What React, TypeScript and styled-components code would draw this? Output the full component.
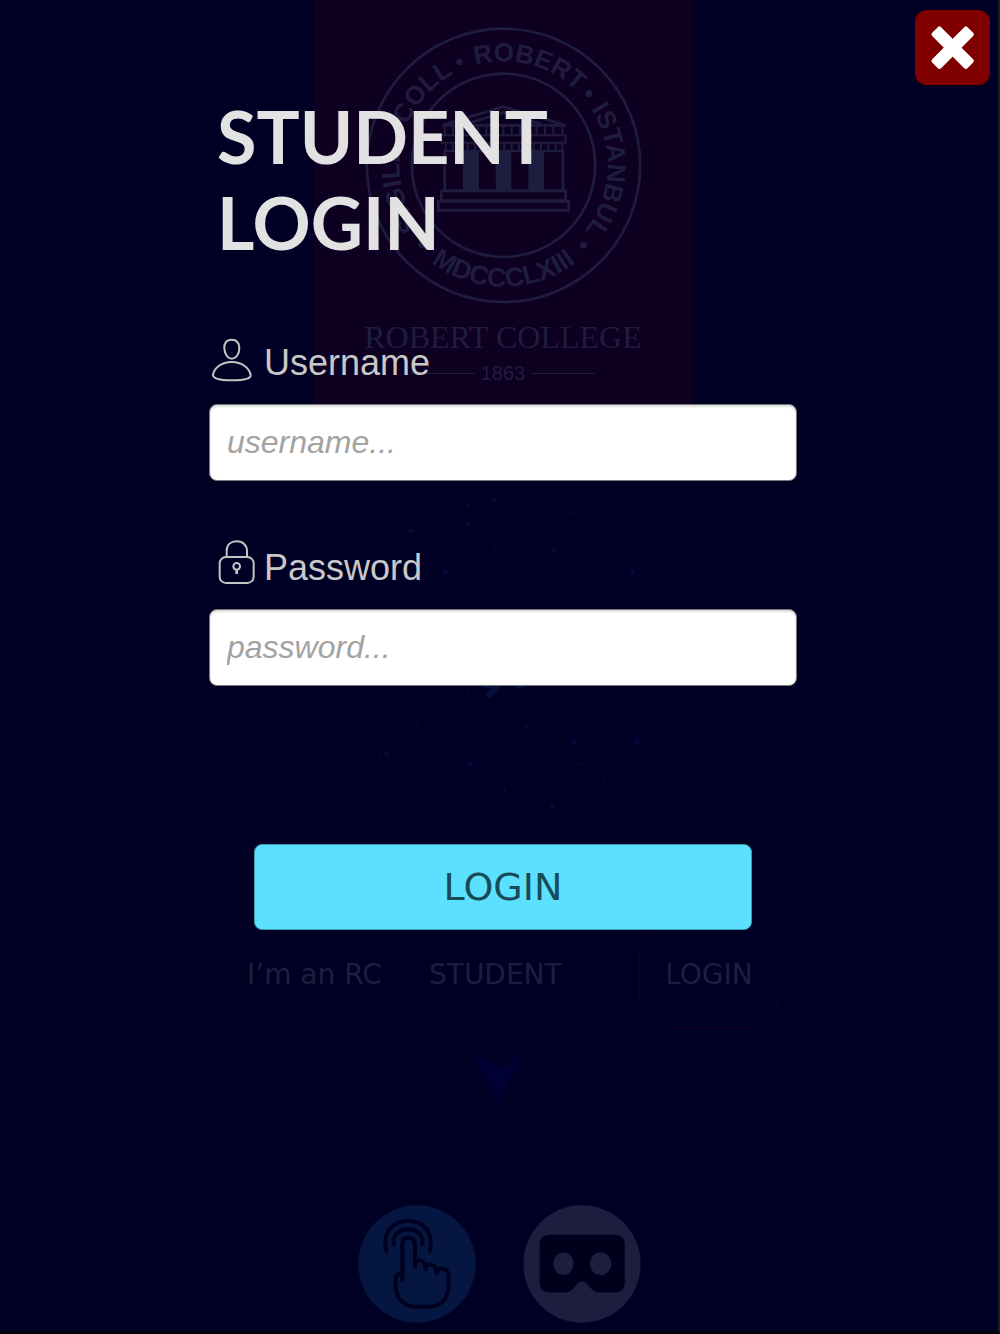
import React from "react";
import styled, { createGlobalStyle } from "styled-components";

const display = `Lato, "Open Sans", sans-serif`;
const wide = `"DejaVu Sans", Verdana, sans-serif`;
const sans = `"Liberation Sans", Arial, sans-serif`;
const serif = `"Liberation Serif", "Times New Roman", serif`;
const ink = "#1f1d3f";
const night = "#000025";

const GlobalStyle = createGlobalStyle`
  *, *::before, *::after { box-sizing: border-box; }
  body { margin: 0; background: ${night}; }
`;

const Screen = styled.div`
  display: grid;
  min-height: 100vh;
  background: ${night};
  border-right: 2px solid #1c1c1f;
  border-bottom: 3px solid #000010;
  & > * { grid-area: 1 / 1; }
`;

const Backdrop = styled.div`
  display: flex;
  flex-direction: column;
  align-items: center;
  color: ${ink};
`;

const Banner = styled.header`
  display: flex;
  flex-direction: column;
  align-items: center;
  width: 379px;
  height: 410px;
  margin-left: 8px;
  padding-top: 26px;
  background: #0d0021;
`;

const CollegeName = styled.div`
  margin-top: 14px;
  font: 32px/36px ${serif};
  white-space: nowrap;
`;

const Founded = styled.div`
  display: flex;
  align-items: center;
  gap: 6px;
  margin-top: 4px;
  font: 20px/28px ${sans};
  &::before, &::after {
    content: "";
    width: 64px;
    height: 1px;
    background: ${ink};
  }
`;

const Network = styled.svg`
  display: block;
  width: 330px;
  height: 350px;
  margin: 70px 0 92px 12px;
`;

const Steps = styled.div`
  display: grid;
  grid-template-columns: 182px 210px 140px;
  align-items: center;
  width: 532px;
  margin-left: 28px;
  font: 28px/32px ${wide};
`;

const StepFrame = styled.span`
  display: grid;
  place-items: center;
  height: 106px;
  border: 1px solid #17001f;
  border-radius: 30px;
`;

const Arrow = styled.svg`
  display: block;
  width: 48px;
  height: 48px;
  margin: 25px 2px 104px 0;
`;

const Modes = styled.div`
  display: flex;
  gap: 47px;
  padding-bottom: 8px;
`;

const ModeIcon = styled.svg`
  display: block;
  width: 118px;
  height: 118px;
`;

const Dialog = styled.main`
  display: flex;
  flex-direction: column;
  align-items: center;
`;

const TopBar = styled.div`
  display: flex;
  justify-content: flex-end;
  align-self: stretch;
  padding: 10px 8px 0;
`;

const CloseButton = styled.button`
  width: 75px;
  height: 75px;
  padding: 0;
  border: 0;
  border-radius: 12px;
  background: #800000;
  cursor: pointer;
  svg { display: block; width: 75px; height: 75px; }
`;

const Form = styled.form`
  display: flex;
  flex-direction: column;
  width: 100%;
  max-width: 588px;
  margin-left: 8px;
  padding-top: 8px;
`;

const Title = styled.h1`
  max-width: 400px;
  margin: 0 0 71px 8px;
  color: #e2e2e2;
  font: 700 72px/86px ${display};
`;

const Field = styled.div`
  display: flex;
  flex-direction: column;
  gap: 14px;
  margin-bottom: 60px;
`;

const FieldLabel = styled.label`
  display: flex;
  align-items: flex-start;
  gap: 11px;
  color: #c8c8c8;
  font: 36px/54px ${sans};
  svg { display: block; width: 44px; height: 48px; overflow: visible; }
`;

const TextBox = styled.input`
  width: 100%;
  height: 77px;
  padding: 0 17px;
  border: 1px solid #777;
  border-radius: 8px;
  background: #fff;
  box-shadow: inset 0 2px 2px #ddd;
  color: #333;
  font: 32px/40px ${sans};
  &::placeholder { color: #a3a3a3; font-style: italic; opacity: 1; }
`;

const LoginButton = styled.button`
  align-self: center;
  width: 498px;
  max-width: 100%;
  height: 86px;
  margin-top: 98px;
  padding: 0;
  border: 1px solid #3a9ab0;
  border-radius: 8px;
  background: #5ce0ff;
  color: #194a57;
  font: 38px/48px ${wide};
  cursor: pointer;
`;

const CX = 613.5;
const CY = 496;

type ArcProps = { id: string; angle: number; radius: number; size: number; flip?: boolean; children: string };

/* A word centred on the given angle, in degrees clockwise from the top. */
const ArcText = ({ id, angle, radius, size, flip, children }: ArcProps) => {
  const point = (deg: number) => {
    const t = (deg * Math.PI) / 180;
    return `${(CX + radius * Math.sin(t)).toFixed(1)} ${(CY - radius * Math.cos(t)).toFixed(1)}`;
  };
  const from = flip ? angle + 80 : angle - 80;
  const to = flip ? angle - 80 : angle + 80;
  return (
    <>
      <path id={id} d={`M${point(from)}A${radius} ${radius} 0 0 ${flip ? 0 : 1} ${point(to)}`} fill="none" />
      <text fontSize={size} fontWeight="700" fontFamily="Liberation Sans, Arial, sans-serif" fill={ink} textAnchor="middle">
        <textPath href={`#${id}`} startOffset="50%">{children}</textPath>
      </text>
    </>
  );
};

const Seal = () => (
  <svg width="277" height="279" viewBox="198 78 831 837" aria-hidden="true">
    <g fill="none" stroke={ink} strokeWidth="8">
      <circle cx={CX} cy={CY} r="410" />
      <circle cx={CX} cy={CY} r="275" />
      <path d="M430 376L613 320L800 376Z M500 372L613 338L727 372" />
      <path d="M437 453H792V572H437Z M427 573H800V602H427Z M418 604H809V631H418Z" />
    </g>
    <g fill="none" stroke={ink} strokeWidth="6">
      <path d="M437 378V408M462 378V408M487 378V408M512 378V408M537 378V408M562 378V408M587 378V408M613 378V408M638 378V408M663 378V408M688 378V408M713 378V408M738 378V408M763 378V408M790 378V408" />
      <path d="M427 406H800V428H427Z M440 428V452M462 428V452M484 428V452M506 428V452M528 428V452M550 428V452M572 428V452M594 428V452M616 428V452M638 428V452M660 428V452M682 428V452M704 428V452M726 428V452M748 428V452M770 428V452M790 428V452" />
    </g>
    <g fill={ink}>
      <path d="M492 453H540V572H492Z M590 453H637V572H590Z M688 453H735V572H688Z" />
      <circle cx="481" cy="186" r="10" />
      <circle cx="870" cy="281" r="10" />
      <circle cx="853" cy="736" r="10" />
      <circle cx="368" cy="734" r="10" />
    </g>
    <ArcText id="arc-sigill" angle={-103} radius={312} size={78}>SIGILL</ArcText>
    <ArcText id="arc-coll" angle={-48} radius={312} size={78}>COLL</ArcText>
    <ArcText id="arc-robert" angle={14.5} radius={312} size={78}>ROBERT</ArcText>
    <ArcText id="arc-istanbul" angle={93} radius={312} size={78}>ISTANBUL</ArcText>
    <ArcText id="arc-year" angle={180} radius={364} size={80} flip>MDCCCLXIII</ArcText>
  </svg>
);

const nodes = [
  [462, 62, 7], [385, 76, 5], [384, 132, 7], [213, 153, 7], [692, 97, 6], [463, 207, 5], [643, 212, 8], [316, 274, 8],
  [878, 273, 8], [50, 361, 5], [385, 638, 5], [235, 742, 5], [560, 740, 5], [702, 786, 8], [890, 784, 8], [929, 714, 4],
  [140, 821, 8], [121, 825, 5], [163, 870, 4], [391, 850, 8], [724, 850, 5], [792, 908, 4], [494, 930, 5], [638, 977, 8],
  [334, 990, 4], [555, 1003, 4],
];

const Globe = () => (
  <Network viewBox="0 0 990 1050" aria-hidden="true">
    <g fill="none" stroke="#02022c" strokeWidth="3">
      <path d="M213 153L384 132M245 274H316L287 350M316 274L400 385M463 207L530 178L643 212L878 273L868 384M643 212L600 310M692 97L750 384M105 290L125 370" />
      <path d="M40 620L100 770M210 620L235 742M560 620L702 786L890 784L868 620M890 784L925 700M391 850L140 821M702 786L391 850M890 784L724 850M280 960L334 990" />
    </g>
    <g fill="#04083a">
      {nodes.map(([x, y, r]) => <circle key={`${x}-${y}`} cx={x} cy={y} r={r} />)}
    </g>
    <path d="M405 616H488L455 652Q443 660 438 643L455 627Z M520 616H580L540 624Q528 626 520 616Z" fill="#080f40" />
  </Network>
);

const TouchIcon = () => (
  <ModeIcon viewBox="54 45 354 356" aria-hidden="true">
    <circle cx="231" cy="223" r="177" fill="#051740" />
    <g fill="none" stroke="#000020" strokeWidth="12" strokeLinecap="round" strokeLinejoin="round">
      <path d="M139 184C125 137 151 93 204 93C257 93 283 137 269 184" />
      <path d="M161 164C157 139 174 118 204 118C234 118 251 139 247 164" />
      <path d="M187 272V163Q187 144 204 144Q225 144 225 163V232V222Q229 211 241 212Q257 214 257 240V234Q263 222 275 225Q290 229 290 252V246Q296 235 309 237Q326 242 326 260V290C326 328 302 352 265 352H232C192 352 174 329 168 304Q164 280 168 262Q172 252 187 250" />
    </g>
  </ModeIcon>
);

const HeadsetIcon = () => (
  <ModeIcon viewBox="548 45 354 356" aria-hidden="true">
    <circle cx="725" cy="223" r="177" fill={ink} />
    <path d="M629 135H823Q854 135 854 166V279Q854 309 823 309H779Q763 309 752 297L738 281Q725 270 712 281L699 297Q688 309 672 309H629Q597 309 597 279V166Q597 135 629 135Z" fill="#00001c" />
    <ellipse cx="669" cy="222" rx="31" ry="34" fill={ink} />
    <ellipse cx="781" cy="222" rx="32" ry="34" fill={ink} />
  </ModeIcon>
);

const UserIcon = () => (
  <svg viewBox="27 46 132 144" fill="none" stroke="#c4c4c4" strokeWidth="6" aria-hidden="true">
    <path d="M95 57C79 57 72 68 73 83C74 101 84 114 95 114C107 114 118 101 118 83C118 68 111 57 95 57Z" />
    <path d="M95 124C65 124 43 141 39 162C38 173 56 179 96 179C136 179 154 173 152 162C147 141 126 124 95 124Z" />
  </svg>
);

const LockIcon = () => (
  <svg viewBox="27 33 132 144" fill="none" stroke="#c4c4c4" strokeWidth="6" aria-hidden="true">
    <path d="M80 80V63C80 44 93 34 110 34C128 34 141 45 141 63V80" />
    <rect x="59" y="81" width="102" height="78" rx="19" />
    <circle cx="110" cy="109" r="10" />
    <path d="M110 118V132" strokeWidth="8" />
  </svg>
);

export default function App() {
  return (
    <>
      <GlobalStyle />
      <Screen>
        <Backdrop>
          <Banner>
            <Seal />
            <CollegeName>ROBERT COLLEGE</CollegeName>
            <Founded>1863</Founded>
          </Banner>
          <Globe />
          <Steps>
            <span>I’m an RC</span>
            <span>STUDENT</span>
            <StepFrame>LOGIN</StepFrame>
          </Steps>
          <Arrow viewBox="0 0 144 144" aria-hidden="true">
            <path d="M9 11L73 51L135 11L73 138Z" fill="#000035" stroke="#000035" strokeWidth="10" strokeLinejoin="round" />
          </Arrow>
          <Modes>
            <TouchIcon />
            <HeadsetIcon />
          </Modes>
        </Backdrop>
        <Dialog>
          <TopBar>
            <CloseButton type="button" aria-label="Close">
              <svg viewBox="46 28 225 225" fill="#fff" aria-hidden="true">
                <rect x="84" y="122" width="150" height="38" rx="7" transform="rotate(45 159 141)" />
                <rect x="84" y="122" width="150" height="38" rx="7" transform="rotate(-45 159 141)" />
              </svg>
            </CloseButton>
          </TopBar>
          <Form onSubmit={(event) => event.preventDefault()}>
            <Title>STUDENT LOGIN</Title>
            <Field>
              <FieldLabel htmlFor="username"><UserIcon />Username</FieldLabel>
              <TextBox id="username" type="text" placeholder="username..." autoComplete="username" />
            </Field>
            <Field>
              <FieldLabel htmlFor="password"><LockIcon />Password</FieldLabel>
              <TextBox id="password" type="password" placeholder="password..." autoComplete="current-password" />
            </Field>
            <LoginButton type="submit">LOGIN</LoginButton>
          </Form>
        </Dialog>
      </Screen>
    </>
  );
}
